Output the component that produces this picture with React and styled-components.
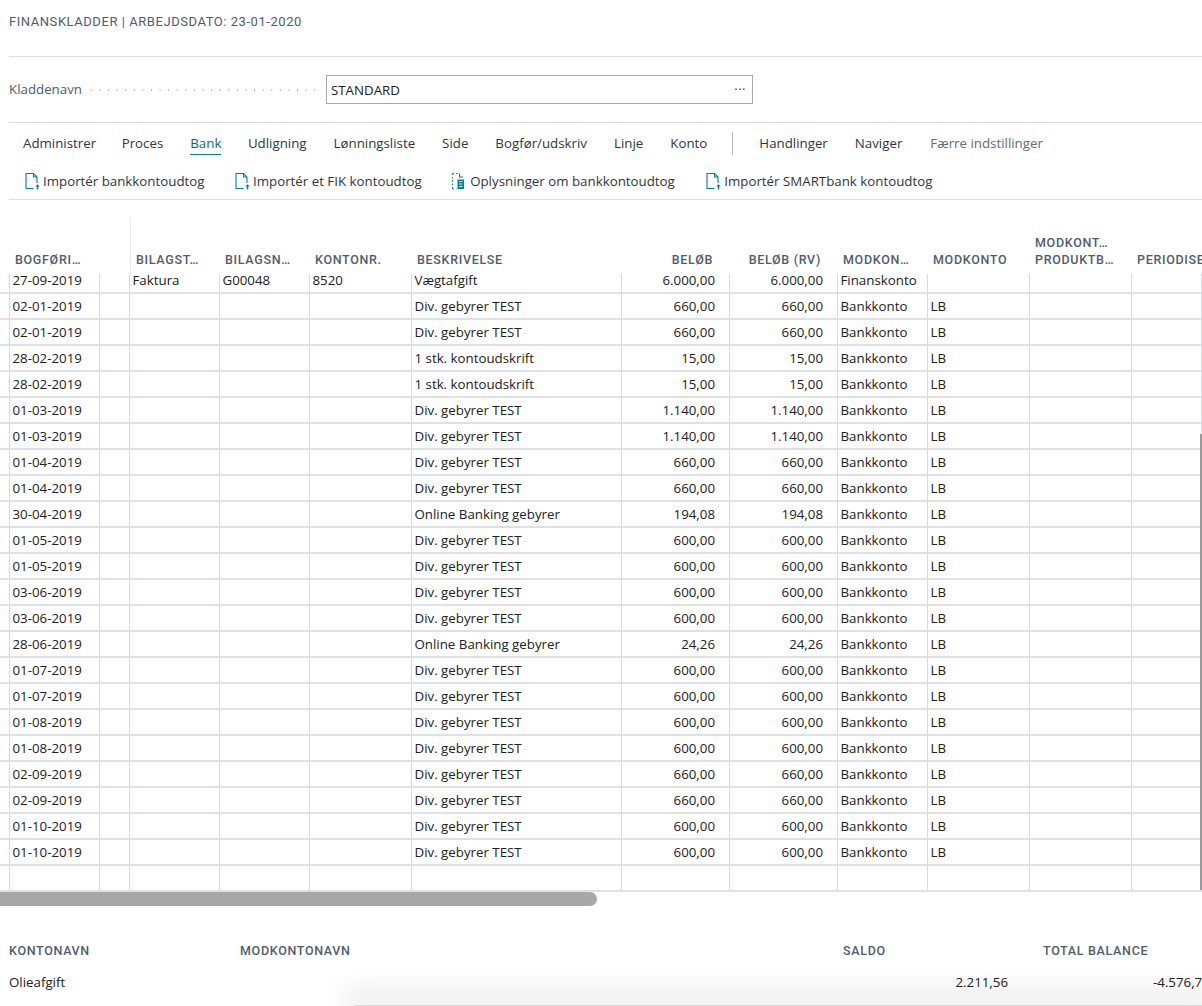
import React from 'react';
import styled, { createGlobalStyle } from 'styled-components';

const GlobalStyle = createGlobalStyle`
  html, body { margin: 0; padding: 0; background: #fff; }
  body { font-family: "Open Sans", "Noto Sans", sans-serif; color: #212121; }
`

const Page = styled.div`
  position: relative;
  width: 1202px;
  height: 1006px;
  overflow: hidden;
  background: #fff;
`
const TitleBar = styled.div`
  height: 57px;
  margin-left: 9px;
  border-bottom: 1px solid #dcdde3;
  box-sizing: border-box;
  padding-top: 13px;
  font-family: Roboto, sans-serif;
  font-size: 13px;
  line-height: 17px;
  letter-spacing: 0.55px;
  color: #505c6d;
`
const FieldRow = styled.div`
  height: 66px;
  margin-left: 9px;
  border-bottom: 1px solid #dcdde3;
  box-sizing: border-box;
  display: flex;
  align-items: center;
  padding-bottom: 1px;
`
const FieldLabel = styled.div`
  width: 317px;
  display: flex;
  align-items: center;
  gap: 5px;
  font-size: 13.3px;
  color: #505c6d;
`
const Dots = styled.span`
  flex: 1;
  margin: 1px 8px 0 0;
  height: 2px;
  background-image: radial-gradient(circle, #b4b9c2 0.8px, transparent 1px);
  background-size: 8.6px 2px;
`
const FieldInput = styled.div`
  width: 427px;
  height: 29px;
  box-sizing: border-box;
  border: 1px solid #a9a9a9;
  display: flex;
  align-items: center;
  justify-content: space-between;
  padding: 1px 6px 0 4px;
  font-size: 13.3px;
`
const Ellipsis = styled.span`
  font-size: 13px;
  line-height: 13px;
  letter-spacing: 0.5px;
  color: #444;
`
const Ribbon = styled.div`
  height: 77px;
  margin-left: 9px;
  border-bottom: 1px solid #dcdde3;
  box-sizing: border-box;
`
const TabRow = styled.div`
  height: 41px;
  display: flex;
  align-items: center;
  padding: 0 0 0 14px;
  font-size: 13.3px;
`
const Tab = styled.div`
  margin-right: ${props => props.$gap}px;
  line-height: 20px;
  color: ${props => props.$active ? '#00707a' : props.$muted ? '#5f6b7c' : '#2f3640'};
  border-bottom: 1px solid ${props => props.$active ? '#00848e' : 'transparent'};
  padding-bottom: 1px;
`
const TabDivider = styled.div`
  width: 1px;
  height: 23px;
  background: #b9bec6;
  margin: 0 26px 0 0;
`
const ActionRow = styled.div`
  height: 33px;
  display: flex;
  align-items: center;
  padding-left: 14px;
  font-size: 13.3px;
  color: #2f3640;
`
const Action = styled.div`
  display: flex;
  align-items: center;
  gap: 2px;
  margin-right: ${props => props.$gap}px;
  white-space: nowrap;
`
const HeadRow = styled.div`
  display: grid;
  grid-template-columns: 10px 90px 30px 90px 90px 102px 210px 108px 108px 90px 102px 102px 70px;
  height: 56px;
  margin-top: 18px;
  font-family: Roboto, sans-serif;
  font-weight: 500;
  font-size: 12.5px;
  line-height: 17px;
  letter-spacing: 0.68px;
  color: #505c6d;
`
const HeadCell = styled.div`
  box-sizing: border-box;
  display: flex;
  align-items: flex-end;
  padding: 0 ${props => props.$right ? '17px' : '0'} 6px 5px;
  justify-content: ${props => props.$right ? 'flex-end' : 'flex-start'};
  white-space: pre-line;
  overflow: hidden;
  border-left: ${props => props.$line ? '1px solid #ebebef' : '0'};
`
const GridBody = styled.div`
  height: 618px;
  overflow: hidden;
`
const Row = styled.div`
  display: grid;
  grid-template-columns: 10px 90px 30px 90px 90px 102px 210px 108px 108px 90px 102px 102px 70px;
  height: 26px;
  box-sizing: border-box;
  border-bottom: 2px solid #dfdfe6;
  font-size: 13.3px;
  line-height: 24px;
  &:first-child { margin-top: -6px; }
`
const Cell = styled.div`
  box-sizing: border-box;
  border-right: 1px solid #d9d9e0;
  padding: ${props => props.$right ? '0 14px 0 0' : '0 0 0 2.5px'};
  text-align: ${props => props.$right ? 'right' : 'left'};
  white-space: nowrap;
  overflow: hidden;
`
const HScroll = styled.div`
  height: 14px;
  width: 597px;
  background: #a8a8a8;
  border-radius: 0 7px 7px 0;
`
const VScroll = styled.div`
  position: absolute;
  top: 434px;
  right: 0;
  width: 2px;
  height: 456px;
  background: #9a9a9a;
`
const Summary = styled.div`
  display: grid;
  grid-template-columns: 231px 603px 200px 1fr;
  margin: 36px 0 0 9px;
`
const SummaryHead = styled.div`
  font-family: Roboto, sans-serif;
  font-weight: 500;
  font-size: 12.5px;
  line-height: 17px;
  letter-spacing: 0.68px;
  color: #505c6d;
  margin-bottom: 13px;
`
const SummaryValue = styled.div`
  font-size: 13.3px;
  line-height: 20px;
  white-space: nowrap;
  text-align: ${props => props.$right ? 'right' : 'left'};
  padding-right: ${props => props.$pr || 0}px;
  padding-left: ${props => props.$pl || 0}px;
`
const BottomShadow = styled.div`
  position: absolute;
  left: 355px;
  right: 0;
  bottom: 0;
  height: 1px;
  background: #d8d8d8;
  box-shadow: 0 -6px 26px 12px rgba(0, 0, 0, 0.07);
`

const ImportIcon = () => (
  <svg width="18" height="20" viewBox="0 0 18 20" fill="none" stroke="#00848e" strokeWidth="1.1">
    <path d="M10.5 17.5H3V2.5h7.5l3.5 3.5v6" />
    <path d="M10.5 2.5V6H14" />
    <path d="M14.5 18.5v-4" strokeWidth="1.5" />
    <path d="M12.3 15.6l2.2-2.4 2.2 2.4z" fill="#00848e" stroke="none" />
  </svg>
)

const InfoIcon = () => (
  <svg width="18" height="20" viewBox="0 0 18 20" fill="none" stroke="#00848e" strokeWidth="1.1">
    <path d="M2.5 2.5V18" strokeDasharray="1.6 1.8" />
    <path d="M2.5 2.5H9M2.5 18h4" strokeDasharray="1.6 1.8" />
    <path d="M9.5 2.5V6H13" />
    <path d="M7.5 8.5H14V18H7.5z" fill="#00848e" stroke="none" />
    <path d="M9 10.5h3.5M9 13h3.5M9 15.5h3.5" stroke="#fff" strokeWidth="0.8" />
  </svg>
)

const tabs = [
  ['Administrer', 25.5], ['Proces', 27], ['Bank', 26.5], ['Udligning', 27], ['Lønningsliste', 27],
  ['Side', 27], ['Bogfør/udskriv', 27], ['Linje', 27], ['Konto', 25],
]

const headers = [
  [''], ['BOGFØRI…'], [''], ['BILAGST…'], ['BILAGSN…'], ['KONTONR.'], ['BESKRIVELSE'],
  ['BELØB', true], ['BELØB (RV)', true], ['MODKON…'], ['MODKONTO'], ['MODKONT…\nPRODUKTB…'], ['PERIODISE'],
]

const rows = [
  ['27-09-2019', 'Vægtafgift', '6.000,00', '6.000,00'],
  ['02-01-2019', 'Div. gebyrer TEST', '660,00', '660,00'],
  ['02-01-2019', 'Div. gebyrer TEST', '660,00', '660,00'],
  ['28-02-2019', '1 stk. kontoudskrift', '15,00', '15,00'],
  ['28-02-2019', '1 stk. kontoudskrift', '15,00', '15,00'],
  ['01-03-2019', 'Div. gebyrer TEST', '1.140,00', '1.140,00'],
  ['01-03-2019', 'Div. gebyrer TEST', '1.140,00', '1.140,00'],
  ['01-04-2019', 'Div. gebyrer TEST', '660,00', '660,00'],
  ['01-04-2019', 'Div. gebyrer TEST', '660,00', '660,00'],
  ['30-04-2019', 'Online Banking gebyrer', '194,08', '194,08'],
  ['01-05-2019', 'Div. gebyrer TEST', '600,00', '600,00'],
  ['01-05-2019', 'Div. gebyrer TEST', '600,00', '600,00'],
  ['03-06-2019', 'Div. gebyrer TEST', '600,00', '600,00'],
  ['03-06-2019', 'Div. gebyrer TEST', '600,00', '600,00'],
  ['28-06-2019', 'Online Banking gebyrer', '24,26', '24,26'],
  ['01-07-2019', 'Div. gebyrer TEST', '600,00', '600,00'],
  ['01-07-2019', 'Div. gebyrer TEST', '600,00', '600,00'],
  ['01-08-2019', 'Div. gebyrer TEST', '600,00', '600,00'],
  ['01-08-2019', 'Div. gebyrer TEST', '600,00', '600,00'],
  ['02-09-2019', 'Div. gebyrer TEST', '660,00', '660,00'],
  ['02-09-2019', 'Div. gebyrer TEST', '660,00', '660,00'],
  ['01-10-2019', 'Div. gebyrer TEST', '600,00', '600,00'],
  ['01-10-2019', 'Div. gebyrer TEST', '600,00', '600,00'],
]

const JournalRow = ({ date, text, amount, amountLcy, first }) => (
  <Row>
    <Cell />
    <Cell>{date}</Cell>
    <Cell />
    <Cell>{first ? 'Faktura' : ''}</Cell>
    <Cell>{first ? 'G00048' : ''}</Cell>
    <Cell>{first ? '8520' : ''}</Cell>
    <Cell>{text}</Cell>
    <Cell $right>{amount}</Cell>
    <Cell $right>{amountLcy}</Cell>
    <Cell>{date ? (first ? 'Finanskonto' : 'Bankkonto') : ''}</Cell>
    <Cell>{date && !first ? 'LB' : ''}</Cell>
    <Cell />
    <Cell />
  </Row>
)

const App = () => {
  return (
    <Page>
      <GlobalStyle />
      <TitleBar>FINANSKLADDER | ARBEJDSDATO: 23-01-2020</TitleBar>
      <FieldRow>
        <FieldLabel>Kladdenavn<Dots /></FieldLabel>
        <FieldInput>STANDARD<Ellipsis>···</Ellipsis></FieldInput>
      </FieldRow>
      <Ribbon>
        <TabRow>
          {tabs.map(([label, gap]) => (
            <Tab key={label} $gap={gap} $active={label === 'Bank'}>{label}</Tab>
          ))}
          <TabDivider />
          <Tab $gap={27}>Handlinger</Tab>
          <Tab $gap={28}>Naviger</Tab>
          <Tab $gap={0} $muted>Færre indstillinger</Tab>
        </TabRow>
        <ActionRow>
          <Action $gap={28.5}><ImportIcon />Importér bankkontoudtog</Action>
          <Action $gap={28.5}><ImportIcon />Importér et FIK kontoudtog</Action>
          <Action $gap={29.5}><InfoIcon />Oplysninger om bankkontoudtog</Action>
          <Action $gap={0}><ImportIcon />Importér SMARTbank kontoudtog</Action>
        </ActionRow>
      </Ribbon>
      <HeadRow>
        {headers.map(([label, right], i) => (
          <HeadCell key={i} $right={right} $line={i === 3}>{label}</HeadCell>
        ))}
      </HeadRow>
      <GridBody>
        {rows.map((r, i) => (
          <JournalRow key={i} date={r[0]} text={r[1]} amount={r[2]} amountLcy={r[3]} first={i === 0} />
        ))}
        <JournalRow />
      </GridBody>
      <HScroll />
      <VScroll />
      <Summary>
        <SummaryHead>KONTONAVN</SummaryHead>
        <SummaryHead>MODKONTONAVN</SummaryHead>
        <SummaryHead>SALDO</SummaryHead>
        <SummaryHead>TOTAL BALANCE</SummaryHead>
        <SummaryValue>Olieafgift</SummaryValue>
        <SummaryValue />
        <SummaryValue $right $pr={35}>2.211,56</SummaryValue>
        <SummaryValue $pl={110}>-4.576,7</SummaryValue>
      </Summary>
      <BottomShadow />
    </Page>
  )
}

export default App
